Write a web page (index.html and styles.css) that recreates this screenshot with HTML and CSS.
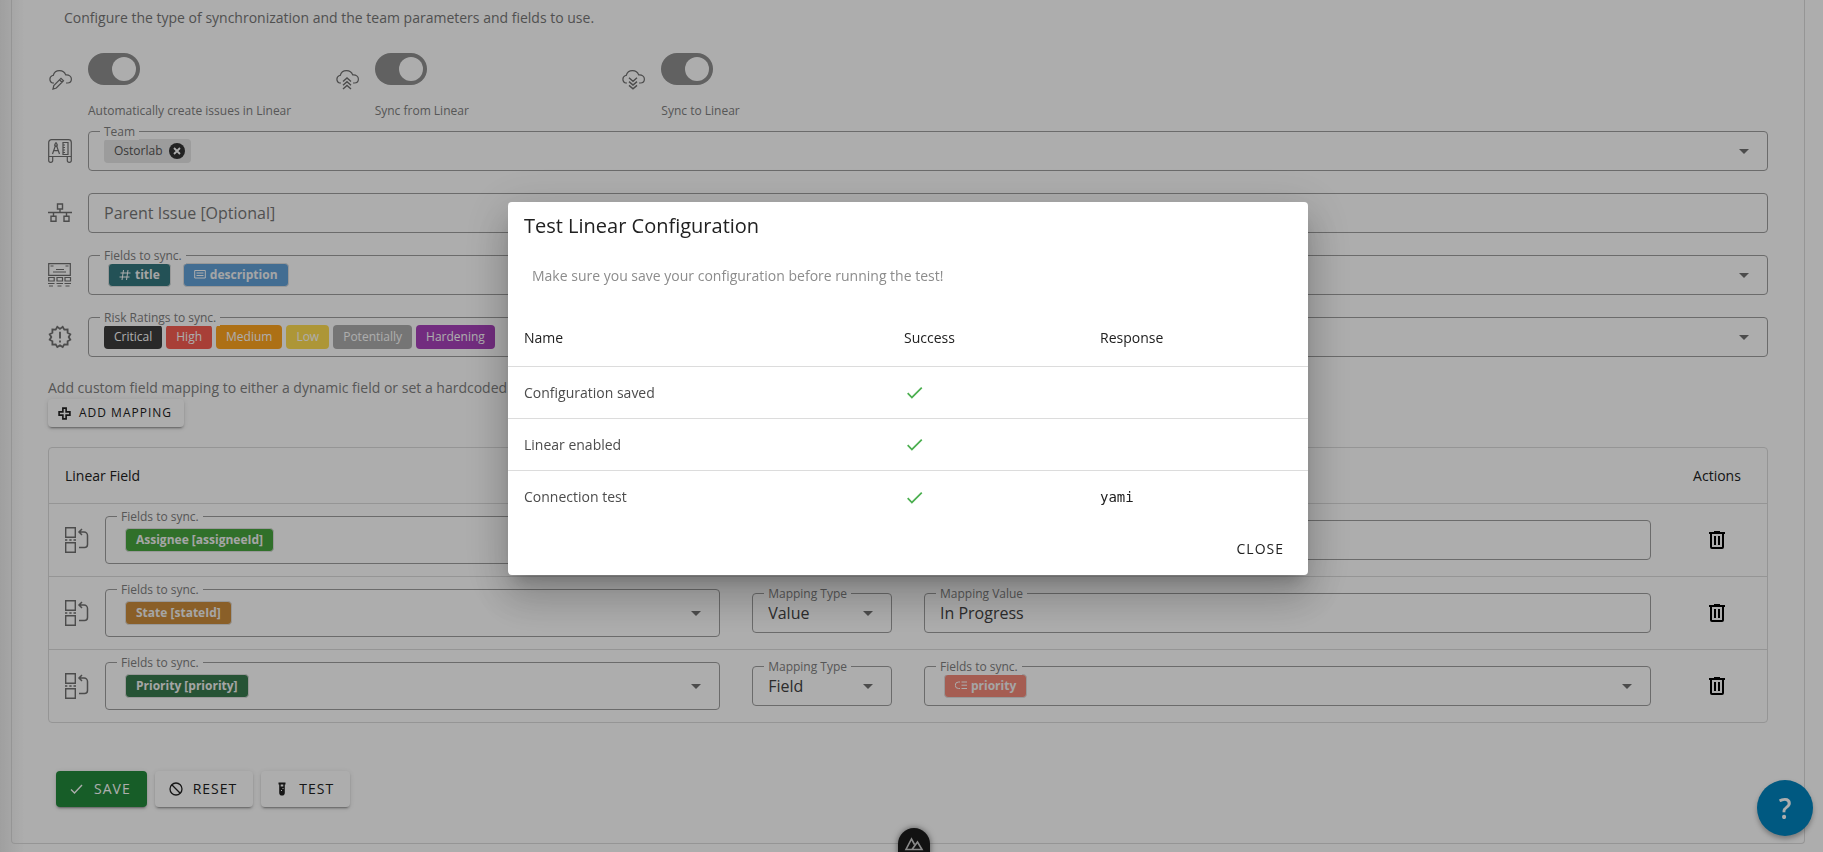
FILE: index.html
```html
<!DOCTYPE html>
<html lang="en">
<head>
  <meta charset="UTF-8" />
  <meta name="viewport" content="width=device-width, initial-scale=1" />
  <title>Linear Integration</title>
  <link rel="stylesheet" href="styles.css">
</head>
<body>
  <svg class="sprite" aria-hidden="true">
    <symbol id="cloud" viewBox="0 0 24 20">
      <path d="M6 13H4.500a4 4 0 0 1 0-7.500h.7C6 2.500 8.500.7 11.500.7c3 0 5.200 1.500 6.200 4.200C21 4.500 23.400 6.500 23.400 9c0 2.200-1.500 4-4 4H18" />
    </symbol>
    <symbol id="cloud-edit" viewBox="0 0 24 20">
      <use href="#cloud" width="24" height="20" />
      <path d="M5 19l.8-3.400 7.200-7.300 2.500 2.400-7.200 7.300zM11.500 9.800l2.500 2.400" />
    </symbol>
    <symbol id="cloud-up" viewBox="0 0 24 20">
      <use href="#cloud" width="24" height="20" />
      <path d="M8 11.500L12 8l4 3.500M8 15.200l4-3.500 4 3.500M8 19l4-3.500 4 3.500" stroke-width="1.400" />
    </symbol>
    <symbol id="cloud-down" viewBox="0 0 24 20">
      <use href="#cloud" width="24" height="20" />
      <path d="M8 7.800l4 3.500 4-3.500M8 11.600l4 3.500 4-3.500M8 15.400l4 3.500 4-3.500" stroke-width="1.400" />
    </symbol>
    <symbol id="board" viewBox="0 0 24 24">
      <path d="M.7 22V3.500a2.800 2.800 0 0 1 2.800-2.800h17a2.800 2.800 0 0 1 2.800 2.800V22M.7 17.500h22.600M.7 21.500c0 2.400 4 2.400 4 0v-4M23.300 21.500c0 2.400-4 2.400-4 0v-4" />
      <path d="M8 3v2M4.500 15L7.300 7h1.400l2.800 8M6 11.700h4M15 3.500h5v12h-5zM15 6h2M15 8.500h2M15 11h2M15 13.500h2" />
      <circle cx="8" cy="6" r="1.300" />
    </symbol>
    <symbol id="tree" viewBox="0 0 24 20">
      <path d="M9.500 1h5v5h-5zM12 6v4M0 9.500h24M5.500 9.500V13M18.500 9.500V13M3 13.300h5v5H3zM16 13.300h5v5h-5z" stroke-width="1.400" />
    </symbol>
    <symbol id="form" viewBox="0 0 24 24">
      <path d="M.7.700h21.600v11.600H.7zM2.500 3h3M17.500 3h3M8 6.500h8M5 9h13M.7 14.500h5.500v3.500H.7zM9 14.500h5.500v3.500H9zM17 14.500h5.500v3.500H17zM0 20.500h6.500M8.500 20.500H15M16.500 20.500H23M1 23h4M9.500 23h4M17.500 23h4" />
    </symbol>
    <symbol id="seal" viewBox="0 0 24 24">
      <path d="M12 3.900l2.700-2 1.600 2.700 3.300-.2v3.300l2.700 1.600-1.600 2.700 1.600 2.700-2.700 1.600v3.300l-3.300-.2-1.600 2.700-2.700-1.700-2.700 1.700-1.600-2.700-3.300.2v-3.300l-2.700-1.600L3.300 12 1.700 9.300l2.700-1.600V4.400l3.300.2 1.600-2.700z" stroke-width="1.800" />
      <path d="M12 6.800v6.700M12 15.500v2" stroke-width="1.800" />
    </symbol>
    <symbol id="mapping" viewBox="0 0 24 26">
      <path d="M.7.700h9.600v9.600H.7zM.7 15.700h9.600v9.600H.7zM0 13h2.300M4.300 13h2.300M8.500 13h2.500" stroke-width="1.400" />
      <path d="M14 5h5A3.500 3.500 0 0 1 22.500 8.500v9a3 3 0 0 1-3 3H14M17 2l-3 3 3 3" stroke-width="1.500" />
    </symbol>
    <symbol id="check" viewBox="0 0 24 24">
      <path d="M21 7L9 19l-5.500-5.500 1.400-1.400L9 16.200 19.600 5.600z" />
    </symbol>
    <symbol id="trash" viewBox="0 0 24 24">
      <path d="M9 3v1H4v2h1v13a2 2 0 0 0 2 2h10a2 2 0 0 0 2-2V6h1V4h-5V3zM7 6h10v13H7zm2 2v9h2V8zm4 0v9h2V8z" fill-rule="evenodd" />
    </symbol>
  </svg>

  <main class="card">
    <p class="intro">Configure the type of synchronization and the team parameters and fields to use.</p>

    <div class="switches">
      <div class="switch">
        <svg class="line-icon cloud" aria-hidden="true"><use href="#cloud-edit" /></svg>
        <div class="switch-body">
          <input type="checkbox" class="toggle" id="autoCreate" checked>
          <label for="autoCreate">Automatically create issues in Linear</label>
        </div>
      </div>
      <div class="switch">
        <svg class="line-icon cloud" aria-hidden="true"><use href="#cloud-up" /></svg>
        <div class="switch-body">
          <input type="checkbox" class="toggle" id="syncFrom" checked>
          <label for="syncFrom">Sync from Linear</label>
        </div>
      </div>
      <div class="switch">
        <svg class="line-icon cloud" aria-hidden="true"><use href="#cloud-down" /></svg>
        <div class="switch-body">
          <input type="checkbox" class="toggle" id="syncTo" checked>
          <label for="syncTo">Sync to Linear</label>
        </div>
      </div>
    </div>

    <div class="form-rows">
      <div class="form-row">
        <svg class="line-icon" aria-hidden="true"><use href="#board" /></svg>
        <div class="field dropdown">
          <label for="team">Team</label>
          <span class="chip grey">Ostorlab
            <button class="chip-close" aria-label="Remove Ostorlab"><svg viewBox="0 0 16 16"><circle cx="8" cy="8" r="8" /><path d="M5 5l6 6M11 5l-6 6" /></svg></button>
          </span>
          <input type="text" id="team" role="combobox" readonly>
        </div>
      </div>
      <div class="form-row">
        <svg class="line-icon" aria-hidden="true"><use href="#tree" /></svg>
        <div class="field">
          <input type="text" placeholder="Parent Issue [Optional]" aria-label="Parent Issue [Optional]">
        </div>
      </div>
      <div class="form-row">
        <svg class="line-icon" aria-hidden="true"><use href="#form" /></svg>
        <div class="field dropdown tags">
          <label for="fields">Fields to sync.</label>
          <span class="tag teal"><svg viewBox="0 0 12 12"><path d="M4.500 1L3 11M9 1L7.500 11M1.500 4h10M.5 8h10" /></svg>title</span>
          <span class="tag blue"><svg viewBox="0 0 12 12"><path d="M.7 1.500h10.600v7.500H.7zM2.500 4h7M2.500 6.500h7" /></svg>description</span>
          <input type="text" id="fields" role="combobox" readonly>
        </div>
      </div>
      <div class="form-row">
        <svg class="line-icon" aria-hidden="true"><use href="#seal" /></svg>
        <div class="field dropdown">
          <label for="ratings">Risk Ratings to sync.</label>
          <span class="chip critical">Critical</span>
          <span class="chip high">High</span>
          <span class="chip medium">Medium</span>
          <span class="chip low">Low</span>
          <span class="chip potentially">Potentially</span>
          <span class="chip hardening">Hardening</span>
          <input type="text" id="ratings" role="combobox" readonly>
        </div>
      </div>
    </div>

    <p class="hint">Add custom field mapping to either a dynamic field or set a hardcoded value.</p>
    <button class="btn small"><svg viewBox="0 0 12 12"><path d="M4.500 1h3v3.500H11v3H7.500V11h-3V7.500H1v-3h3.500z" fill="none" stroke="currentColor" stroke-width="1.500" /></svg>Add mapping</button>

    <div class="mapping-box">
      <table class="mapping">
        <colgroup>
          <col class="col-field"><col class="col-type"><col><col class="col-actions">
        </colgroup>
        <thead>
          <tr><th>Linear Field</th><th></th><th></th><th class="center">Actions</th></tr>
        </thead>
        <tbody>
          <tr>
            <td>
              <div class="map-cell">
                <svg class="map-icon" aria-hidden="true"><use href="#mapping" /></svg>
                <div class="field dropdown tags tall">
                  <label for="map1">Fields to sync.</label>
                  <span class="tag green">Assignee [assigneeId]</span>
                  <input type="text" id="map1" role="combobox" readonly>
                </div>
              </div>
            </td>
            <td>
              <div class="field dropdown">
                <label for="type1">Mapping Type</label>
                <select id="type1"><option>Field</option><option selected>Value</option></select>
              </div>
            </td>
            <td>
              <div class="field">
                <label for="value1">Mapping Value</label>
                <input type="text" id="value1">
              </div>
            </td>
            <td class="center"><button class="icon-btn" aria-label="Delete mapping"><svg><use href="#trash" /></svg></button></td>
          </tr>
          <tr>
            <td>
              <div class="map-cell">
                <svg class="map-icon" aria-hidden="true"><use href="#mapping" /></svg>
                <div class="field dropdown tags tall">
                  <label for="map2">Fields to sync.</label>
                  <span class="tag brown">State [stateId]</span>
                  <input type="text" id="map2" role="combobox" readonly>
                </div>
              </div>
            </td>
            <td>
              <div class="field dropdown">
                <label for="type2">Mapping Type</label>
                <select id="type2"><option>Field</option><option selected>Value</option></select>
              </div>
            </td>
            <td>
              <div class="field">
                <label for="value2">Mapping Value</label>
                <input type="text" id="value2" value="In Progress">
              </div>
            </td>
            <td class="center"><button class="icon-btn" aria-label="Delete mapping"><svg><use href="#trash" /></svg></button></td>
          </tr>
          <tr>
            <td>
              <div class="map-cell">
                <svg class="map-icon" aria-hidden="true"><use href="#mapping" /></svg>
                <div class="field dropdown tags tall">
                  <label for="map3">Fields to sync.</label>
                  <span class="tag forest">Priority [priority]</span>
                  <input type="text" id="map3" role="combobox" readonly>
                </div>
              </div>
            </td>
            <td>
              <div class="field dropdown">
                <label for="type3">Mapping Type</label>
                <select id="type3"><option selected>Field</option><option>Value</option></select>
              </div>
            </td>
            <td>
              <div class="field dropdown tags">
                <label for="value3">Fields to sync.</label>
                <span class="tag salmon"><svg viewBox="0 0 12 12"><path d="M5 2H3.500a3 3 0 0 0 0 6.500H5M6.500 2H12M6.500 5.200H12M6.500 8.500H12" /></svg>priority</span>
                <input type="text" id="value3" role="combobox" readonly>
              </div>
            </td>
            <td class="center"><button class="icon-btn" aria-label="Delete mapping"><svg><use href="#trash" /></svg></button></td>
          </tr>
        </tbody>
      </table>
    </div>

    <div class="actions">
      <button class="btn save"><svg viewBox="0 0 18 18"><path d="M3 9.500l3.500 3.500L14 5" fill="none" stroke="currentColor" stroke-width="1.400" /></svg>Save</button>
      <button class="btn"><svg viewBox="-2 -2 18 18"><path d="M7 1a6 6 0 1 0 0 12A6 6 0 0 0 7 1zM2.800 2.800l8.400 8.400" fill="none" stroke="currentColor" stroke-width="1.300" /></svg>Reset</button>
      <button class="btn"><svg viewBox="-2 -2 18 18"><path d="M3.500.5h7v2h-.7v8.300a2.800 2.800 0 0 1-5.600 0V2.500h-.7zM5.700 2.500v2h2.600v-2zM7.500 6v1h1V6zM6 8v1h1V8z" fill-rule="evenodd" /></svg>Test</button>
    </div>
  </main>

  <button class="help" aria-label="Help">?</button>
  <button class="devtools" aria-label="Toggle devtools">
    <svg viewBox="0 0 20 14"><path d="M8 12.500H2L7.500 2l3 5.500M8 12.500h10L13.500 5z" /></svg>
  </button>

  <div class="overlay" id="overlay">
    <dialog class="dialog" open aria-labelledby="dialogTitle">
      <h2 id="dialogTitle">Test Linear Configuration</h2>
      <p>Make sure you save your configuration before running the test!</p>
      <table class="results">
        <thead>
          <tr><th class="name">Name</th><th class="success">Success</th><th>Response</th></tr>
        </thead>
        <tbody>
          <tr><td>Configuration saved</td><td><svg class="ok" role="img" aria-label="Passed"><use href="#check" /></svg></td><td></td></tr>
          <tr><td>Linear enabled</td><td><svg class="ok" role="img" aria-label="Passed"><use href="#check" /></svg></td><td></td></tr>
          <tr><td>Connection test</td><td><svg class="ok" role="img" aria-label="Passed"><use href="#check" /></svg></td><td><code>yami</code></td></tr>
        </tbody>
      </table>
      <div class="dialog-actions">
        <button class="text-btn" onclick="closeDialog()">Close</button>
      </div>
    </dialog>
  </div>

  <script>
    function closeDialog() {
      document.getElementById('overlay').style.display = 'none';
    }
  </script>
</body>
</html>
```

FILE: styles.css
```css
* {
  box-sizing: border-box;
}

body {
  margin: 0;
  padding: 0 18px 8px 11px;
  font-family: "Open Sans", "Noto Sans", sans-serif;
  font-size: 14px;
  line-height: 20px;
  color: #212121;
  background: linear-gradient(to right, #ebebeb, #fff 24px);
}

input, select, button {
  font: inherit;
  color: inherit;
}

button {
  cursor: pointer;
}

.sprite {
  position: absolute;
  width: 0;
  height: 0;
}

.card {
  padding: 8px 36px 36px;
  border: 1px solid #dcdcdc;
  border-top: none;
  border-radius: 0 0 4px 4px;
}

.intro {
  margin: 0 16px;
  font-size: 14px;
  color: #777;
}

/* switches */
.switches {
  display: flex;
  margin-top: 25px;
}

.switch {
  display: flex;
  gap: 16px;
  width: calc(100% / 6);
}

.switch-body {
  display: flex;
  flex-direction: column;
  gap: 16px;
  white-space: nowrap;
}

.switch-body label {
  font-size: 12px;
  color: #808080;
}

.toggle {
  appearance: none;
  width: 52px;
  height: 32px;
  margin: 0;
  padding: 4px;
  border-radius: 16px;
  background: #8f8f8f;
}

.toggle::before {
  content: "";
  display: block;
  width: 24px;
  height: 24px;
  border-radius: 50%;
  background: #fff;
}

.toggle:checked::before {
  margin-left: 20px;
}

.line-icon, .map-icon {
  flex: none;
  width: 24px;
  height: 24px;
  fill: none;
  stroke: #707070;
  stroke-width: 1.2;
}

.line-icon.cloud {
  height: 20px;
  margin-top: 17px;
}

/* outlined fields */
.form-rows {
  display: flex;
  flex-direction: column;
  gap: 22px;
  margin-top: 10px;
}

.form-row {
  display: flex;
  align-items: center;
  gap: 16px;
}

.field {
  position: relative;
  flex: 1;
  display: flex;
  align-items: center;
  gap: 4px;
  height: 40px;
  padding: 0 15px;
  border: 1px solid #9e9e9e;
  border-radius: 4px;
}

.field.tall {
  height: 48px;
}

.field > label {
  position: absolute;
  top: -8px;
  left: 11px;
  padding: 0 4px;
  font-size: 12px;
  line-height: 16px;
  color: #808080;
  background: #fff;
}

.field input, .field select {
  flex: 1;
  min-width: 0;
  width: 100%;
  height: 38px;
  padding: 0;
  border: none;
  outline: none;
  appearance: none;
  background: transparent;
  font-size: 16px;
  color: #424242;
}

.field input::placeholder {
  color: #777;
  opacity: 1;
}

.dropdown::after {
  content: "";
  position: absolute;
  right: 18px;
  top: calc(50% - 2px);
  border: 5px solid transparent;
  border-top-color: #707070;
  border-bottom: none;
  pointer-events: none;
}

/* chips and tags */
.chip {
  display: flex;
  align-items: center;
  gap: 6px;
  height: 24px;
  padding: 0 10px;
  border-radius: 4px;
  font-size: 12px;
  color: #fff;
}

.chip.grey {
  padding-right: 6px;
  background: #e6e6e6;
  color: #555;
}

.critical {
  background: #3d3d3d;
}

.high {
  background: #f85d52;
}

.medium {
  background: #ffa51f;
}

.low {
  background: #ffde52;
}

.potentially {
  background: #adadad;
}

.hardening {
  background: #a842bb;
}

.chip-close {
  display: flex;
  padding: 0;
  border: none;
  background: none;
}

.chip-close svg {
  width: 16px;
  height: 16px;
  fill: #333;
  stroke: #fff;
  stroke-width: 1.8;
}

.chip-close circle {
  stroke: none;
}

.tags {
  gap: 12px;
  padding-left: 19px;
}

.tag {
  display: flex;
  align-items: center;
  gap: 4px;
  height: 24px;
  padding: 0 10px;
  border: 1px solid #e0e0e0;
  border-radius: 4px;
  font-size: 12px;
  font-weight: 700;
  color: #f4f4f4;
}

.tag svg {
  width: 12px;
  height: 12px;
  fill: none;
  stroke: #fff;
}

.teal {
  background: #34787f;
}

.blue {
  background: #62a1d8;
}

.green {
  background: #48a53f;
}

.brown {
  background: #cc8d3c;
}

.forest {
  background: #397b4e;
}

.salmon {
  background: #f4897a;
}

.hint {
  margin: 21px 0 1px;
  color: #808080;
}

/* buttons */
.btn {
  display: flex;
  align-items: center;
  gap: 8px;
  height: 36px;
  padding: 0 16px 0 12px;
  border: none;
  border-radius: 4px;
  font-size: 14px;
  letter-spacing: 1px;
  text-transform: uppercase;
  background: #fff;
  box-shadow: 0 3px 1px -2px rgba(0, 0, 0, .2), 0 2px 2px rgba(0, 0, 0, .14), 0 1px 5px rgba(0, 0, 0, .12);
}

.btn svg {
  width: 18px;
  height: 18px;
  fill: currentColor;
}

.btn.small {
  height: 28px;
  padding: 0 12px 0 10px;
  font-size: 12px;
}

.btn.small svg {
  width: 13px;
  height: 13px;
}

.btn.save {
  color: #fff;
  background: #238a3c;
}

.icon-btn {
  display: block;
  margin: 0 auto;
  padding: 0;
  border: none;
  background: none;
}

.icon-btn svg {
  display: block;
  width: 24px;
  height: 24px;
}

/* mapping table */
.mapping-box {
  margin-top: 20px;
  border: 1px solid #dcdcdc;
  border-radius: 4px;
}

table {
  width: 100%;
  border-spacing: 0;
  table-layout: fixed;
}

th, td {
  padding: 0 16px;
  text-align: left;
}

th {
  height: 56px;
  font-weight: 400;
}

.center {
  text-align: center;
}

.mapping th {
  height: 55px;
}

.mapping td {
  height: 73px;
  border-top: 1px solid #dcdcdc;
}

.mapping .field {
  width: 100%;
}

.col-field {
  width: 40%;
}

.col-type {
  width: 10%;
}

.col-actions {
  width: 100px;
}

.map-cell {
  display: flex;
  align-items: center;
  gap: 16px;
}

.map-icon {
  height: 26px;
}

.actions {
  display: flex;
  gap: 8px;
  margin: 48px 8px 0;
}

/* floating buttons */
.help {
  position: fixed;
  right: 10px;
  bottom: 16px;
  width: 56px;
  height: 56px;
  padding: 0;
  border: none;
  border-radius: 50%;
  font-size: 28px;
  font-weight: 600;
  color: #fff;
  background: #0084bf;
  box-shadow: 0 3px 5px rgba(0, 0, 0, .3);
}

.devtools {
  position: fixed;
  left: calc(50% + 2px);
  bottom: -16px;
  width: 32px;
  height: 40px;
  margin-left: -16px;
  padding: 0 6px 8px;
  border: none;
  border-radius: 16px;
  background: #1b1b1b;
  box-shadow: 0 0 6px rgba(0, 0, 0, .5);
}

.devtools svg {
  display: block;
  width: 20px;
  height: 14px;
  fill: none;
  stroke: #ccc;
  stroke-width: 1.6;
}

/* dialog */
.overlay {
  position: fixed;
  inset: 0;
  display: flex;
  align-items: center;
  justify-content: center;
  padding: 0 7px 75px 0;
  background: rgba(0, 0, 0, .32);
}

.dialog {
  position: static;
  width: 800px;
  max-width: 90%;
  margin: 0;
  padding: 0;
  border: none;
  border-radius: 4px;
  background: #fff;
  color: #212121;
  box-shadow: 0 11px 15px -7px rgba(0, 0, 0, .2), 0 24px 38px 3px rgba(0, 0, 0, .14), 0 9px 46px 8px rgba(0, 0, 0, .12);
}

.dialog h2 {
  margin: 0;
  padding: 8px 16px;
  font-size: 20px;
  font-weight: 400;
  line-height: 32px;
}

.dialog p {
  margin: 0;
  padding: 16px 24px 24px;
  color: #8c8c8c;
}

.results td {
  height: 52px;
  border-top: 1px solid #dcdcdc;
  color: #4c4c4c;
}

.results tr:last-child td {
  height: 53px;
}

.results .name {
  width: 380px;
}

.results .success {
  width: 196px;
}

.results code {
  font-family: "DejaVu Sans Mono", monospace;
  font-size: 14px;
  color: #212121;
}

.ok {
  display: block;
  width: 21px;
  height: 21px;
  fill: #4caf50;
}

.dialog-actions {
  display: flex;
  justify-content: flex-end;
  padding: 8px;
}

.text-btn {
  height: 36px;
  padding: 0 16px;
  border: none;
  background: none;
  letter-spacing: 1px;
  text-transform: uppercase;
}
```
